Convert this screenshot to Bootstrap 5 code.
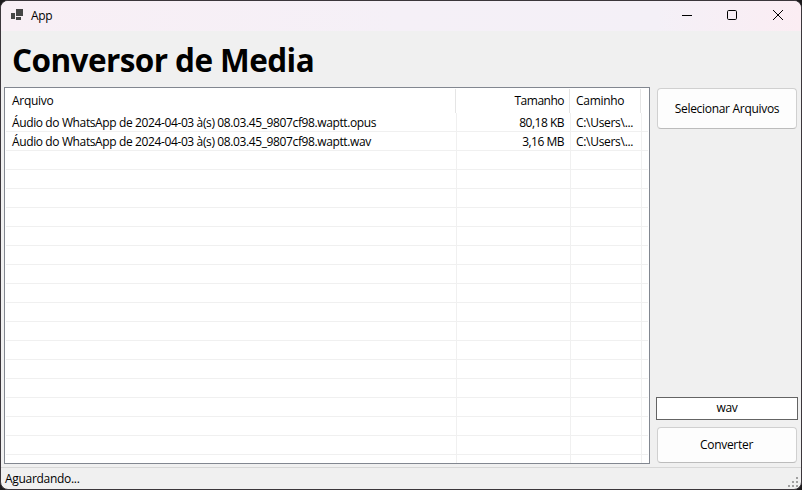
<!DOCTYPE html>
<html lang="pt-BR">
<head>
<meta charset="utf-8">
<meta name="viewport" content="width=device-width, initial-scale=1">
<title>App</title>
<link href="https://cdn.jsdelivr.net/npm/bootstrap@5.3.0/dist/css/bootstrap.min.css" rel="stylesheet">
<style>
  body { background: #1c1a1c; font-family: "Open Sans", "Noto Sans", sans-serif; font-size: 12px; line-height: 16px; color: #000; }
  .app-window { width: 802px; height: 490px; border: 1px solid #3b363b; border-radius: 8px; background: #f0f0f0; }
  .titlebar { height: 30px; background: linear-gradient(90deg, #f8eff5 0%, #f5f0f7 50%, #f4f0f7 82%, #fbedf3 100%); }
  .app-icon { margin-left: 10px; margin-right: 8px; margin-top: -3px; }
  .caption-btn { width: 46px; height: 30px; color: #000; }
  .heading { height: 56px; padding: 7px 0 0 11px; font-size: 31.5px; line-height: 44px; font-weight: 700; }
  .heading span { letter-spacing: -.57px; }
  .main-area { height: 377px; padding-left: 3px; }
  .file-list { width: 646px; height: 377px; border: 1px solid #828790; background: #fff; padding: 1px; }
  .cols { display: grid; grid-template-columns: 451px 114px 71px 1fr; }
  .cols > div { border-right: 1px solid #ececec; white-space: nowrap; overflow: hidden; padding: 0 6px; }
  .cols > div:nth-child(2) { padding-right: 5px; }
  .cols > div:nth-child(3) { padding-left: 5px; }
  .cols > div:last-child { border-right: 0; }
  .list-head { height: 24px; line-height: 24px; grid-template-columns: 450px 114px 71px 1fr; }
  .list-head > div { border-color: #e5e5e5; }
  .list-head > div:nth-child(3) { padding-left: 6px; }
  .list-row { height: 19px; line-height: 20px; border-bottom: 1px solid #f0f0f0; }
  .list-row > div { border-color: #f0f0f0; }
  .list-row > div:nth-child(2) { padding-right: 6px; }
  .side { width: 142px; margin-left: 6px; padding-bottom: 1px; }
  .action { width: 140px; margin-left: 1px; background: #fdfdfd; border: 1px solid #d0d0d0; border-bottom-color: #bcbcbc; border-radius: 4px; font-size: 12px; color: #000; padding: 0; }
  .pick { height: 41px; margin-top: 1px; }
  .convert { height: 36px; margin-top: 7px; }
  .convert .t { margin-right: 1px; }
  .format { height: 23px; width: 142px; background: #fff; border: 1px solid #646464; line-height: 19px; }
  .statusbar { height: 23px; margin-top: 3px; border-top: 1px solid #d7d7d7; padding-left: 4px; }
  .grip { margin: 0 3px 3px 0; }
  .t { display: inline-block; white-space: nowrap; letter-spacing: -.3px; }
  .t-file { letter-spacing: -.38px; }
  .t-size { letter-spacing: -.5px; }
</style>
</head>
<body class="m-0 overflow-hidden">
<div class="app-window d-flex flex-column overflow-hidden">
  <header class="titlebar d-flex align-items-center flex-shrink-0">
    <svg class="app-icon" width="12" height="11" viewBox="0 0 12 11" fill="#454545" shape-rendering="crispEdges"><path d="M0 4h4v6H0zM5 0h7v7H5zM5 8h5v3H5z"/></svg>
    <span class="t">App</span>
    <div class="d-flex ms-auto">
      <div class="caption-btn d-flex align-items-center justify-content-center"><svg width="12" height="12" stroke="currentColor" fill="none"><path d="M2 5.5h10"/></svg></div>
      <div class="caption-btn d-flex align-items-center justify-content-center"><svg width="12" height="12" stroke="currentColor" fill="none"><rect x="1.5" y=".5" width="9" height="9" rx="1.2"/></svg></div>
      <div class="caption-btn d-flex align-items-center justify-content-center"><svg width="12" height="12" stroke="currentColor" fill="none"><path d="M1 0l10 10M11 0L1 10"/></svg></div>
    </div>
  </header>
  <h1 class="heading m-0 flex-shrink-0"><span>Conversor de Media</span></h1>
  <main class="main-area d-flex flex-shrink-0">
    <section class="file-list overflow-hidden">
      <div class="cols list-head"><div><span class="t">Arquivo</span></div><div class="text-end"><span class="t t-size">Tamanho</span></div><div><span class="t">Caminho</span></div><div></div></div>
      <div class="cols list-row"><div><span class="t t-file">Áudio do WhatsApp de 2024-04-03 à(s) 08.03.45_9807cf98.waptt.opus</span></div><div class="text-end"><span class="t t-size">80,18 KB</span></div><div><span class="t">C:\Users\...</span></div><div></div></div>
      <div class="cols list-row"><div><span class="t t-file">Áudio do WhatsApp de 2024-04-03 à(s) 08.03.45_9807cf98.waptt.wav</span></div><div class="text-end"><span class="t t-size">3,16 MB</span></div><div><span class="t">C:\Users\...</span></div><div></div></div>
      <div class="cols list-row"><div></div><div></div><div></div><div></div></div>
      <div class="cols list-row"><div></div><div></div><div></div><div></div></div>
      <div class="cols list-row"><div></div><div></div><div></div><div></div></div>
      <div class="cols list-row"><div></div><div></div><div></div><div></div></div>
      <div class="cols list-row"><div></div><div></div><div></div><div></div></div>
      <div class="cols list-row"><div></div><div></div><div></div><div></div></div>
      <div class="cols list-row"><div></div><div></div><div></div><div></div></div>
      <div class="cols list-row"><div></div><div></div><div></div><div></div></div>
      <div class="cols list-row"><div></div><div></div><div></div><div></div></div>
      <div class="cols list-row"><div></div><div></div><div></div><div></div></div>
      <div class="cols list-row"><div></div><div></div><div></div><div></div></div>
      <div class="cols list-row"><div></div><div></div><div></div><div></div></div>
      <div class="cols list-row"><div></div><div></div><div></div><div></div></div>
      <div class="cols list-row"><div></div><div></div><div></div><div></div></div>
      <div class="cols list-row"><div></div><div></div><div></div><div></div></div>
      <div class="cols list-row"><div></div><div></div><div></div><div></div></div>
      <div class="cols list-row"><div></div><div></div><div></div><div></div></div>
    </section>
    <aside class="side d-flex flex-column">
      <button type="button" class="btn action pick"><span class="t">Selecionar Arquivos</span></button>
      <div class="format text-center mt-auto"><span class="t">wav</span></div>
      <button type="button" class="btn action convert"><span class="t">Converter</span></button>
    </aside>
  </main>
  <footer class="statusbar d-flex align-items-center justify-content-between flex-shrink-0">
    <span class="t">Aguardando...</span>
    <svg class="grip align-self-end" width="10" height="10" fill="#a0a0a0" shape-rendering="crispEdges"><path d="M8 0h2v2H8zM4 4h2v2H4zM8 4h2v2H8zM0 8h2v2H0zM4 8h2v2H4zM8 8h2v2H8z"/></svg>
  </footer>
</div>
<script src="https://cdn.jsdelivr.net/npm/bootstrap@5.3.0/dist/js/bootstrap.bundle.min.js"></script>
</body>
</html>
